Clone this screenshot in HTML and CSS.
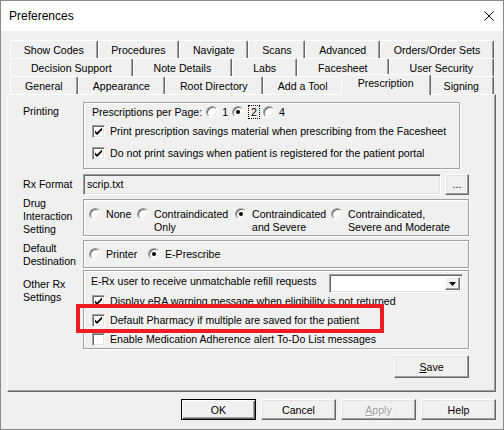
FILE: index.html
```html
<html>
<head>
    <meta http-equiv="Content-Type" content="text/html;charset=utf-8">
    <link rel="stylesheet" href="styles.css">
</head>
<body>
<div class="window">
    <div class="titlebar">
        <span class="title">Preferences</span>
        <svg class="close" viewBox="0 0 10 10"><path d="M0.5 0.5L9.5 9.5M9.5 0.5L0.5 9.5" stroke="#000" stroke-width="1"/></svg>
    </div>
    <div class="client">
        <div class="tabs">
            <div class="tab-row">
                <div class="tab">Show Codes</div>
                <div class="tab">Procedures</div>
                <div class="tab">Navigate</div>
                <div class="tab">Scans</div>
                <div class="tab">Advanced</div>
                <div class="tab">Orders/Order Sets</div>
            </div>
            <div class="tab-row">
                <div class="tab">Decision Support</div>
                <div class="tab">Note Details</div>
                <div class="tab">Labs</div>
                <div class="tab">Facesheet</div>
                <div class="tab">User Security</div>
            </div>
            <div class="tab-row">
                <div class="tab">General</div>
                <div class="tab">Appearance</div>
                <div class="tab">Root Directory</div>
                <div class="tab">Add a Tool</div>
                <div class="tab selected">Prescription</div>
                <div class="tab">Signing</div>
            </div>
        </div>

        <div class="panel">
            <div class="row row-printing">
                <div class="label">Printing</div>
                <div class="group printing">
                    <div class="pp-line">
                        <span>Prescriptions per Page:</span>
                        <span class="opt"><span class="radio"></span><span>1</span></span>
                        <span class="opt"><span class="radio on"></span><span class="focus">2</span></span>
                        <span class="opt"><span class="radio"></span><span>4</span></span>
                    </div>
                    <div class="check-row">
                        <span class="check on"><svg viewBox="0 0 11 11"><path d="M2 4.5v2.5l2 2 5-5v-2.5l-5 5z"/></svg></span>
                        <span>Print prescription savings material when prescribing from the Facesheet</span>
                    </div>
                    <div class="check-row second">
                        <span class="check on"><svg viewBox="0 0 11 11"><path d="M2 4.5v2.5l2 2 5-5v-2.5l-5 5z"/></svg></span>
                        <span>Do not print savings when patient is registered for the patient portal</span>
                    </div>
                </div>
            </div>

            <div class="row row-format">
                <div class="label">Rx Format</div>
                <div class="textbox">scrip.txt</div>
                <div class="btn dots">...</div>
            </div>

            <div class="row row-drug">
                <div class="label">Drug<br>Interaction<br>Setting</div>
                <div class="group drug">
                    <div class="opt"><span class="radio"></span><span>None</span></div>
                    <div class="opt"><span class="radio"></span><span>Contraindicated<br>Only</span></div>
                    <div class="opt"><span class="radio on"></span><span>Contraindicated<br>and Severe</span></div>
                    <div class="opt"><span class="radio"></span><span>Contraindicated,<br>Severe and Moderate</span></div>
                </div>
            </div>

            <div class="row row-dest">
                <div class="label">Default<br>Destination</div>
                <div class="group dest">
                    <div class="opt"><span class="radio"></span><span>Printer</span></div>
                    <div class="opt"><span class="radio on"></span><span>E-Prescribe</span></div>
                </div>
            </div>

            <div class="row row-other">
                <div class="label">Other Rx<br>Settings</div>
                <div class="group other">
                    <div class="erx-line">
                        <span class="erx-text">E-Rx user to receive unmatchable refill requests</span>
                        <div class="combo">
                            <div class="combo-btn"><svg viewBox="0 0 7 4"><path d="M0 0h7L3.5 4z"/></svg></div>
                        </div>
                    </div>
                    <div class="check-row">
                        <span class="check on"><svg viewBox="0 0 11 11"><path d="M2 4.5v2.5l2 2 5-5v-2.5l-5 5z"/></svg></span>
                        <span>Display eRA warning message when eligibility is not returned</span>
                    </div>
                    <div class="check-row">
                        <span class="check on"><svg viewBox="0 0 11 11"><path d="M2 4.5v2.5l2 2 5-5v-2.5l-5 5z"/></svg></span>
                        <span>Default Pharmacy if multiple are saved for the patient</span>
                    </div>
                    <div class="check-row">
                        <span class="check"></span>
                        <span>Enable Medication Adherence alert To-Do List messages</span>
                    </div>
                </div>
            </div>

            <div class="save-row">
                <div class="btn save"><u>S</u>ave</div>
            </div>
        </div>

        <div class="buttons">
            <div class="btn default">OK</div>
            <div class="btn">Cancel</div>
            <div class="btn disabled"><u>A</u>pply</div>
            <div class="btn">Help</div>
        </div>
    </div>

    <!-- annotation box drawn over the dialog -->
    <div class="highlight"></div>
</div>
</body>
</html>
```

FILE: styles.css
```css
* {
    box-sizing: border-box;
}

body {
    margin: 0;
    font-family: 'Liberation Sans', Arial, sans-serif;
    font-size: 10.6px;
    color: #000;
    background: #fff;
}

.window {
    position: relative;
    width: 504px;
    height: 430px;
    border: 1px solid #8a8a8a;
    background: #f0f0f0;
    display: flex;
    flex-direction: column;
}

.titlebar {
    height: 30px;
    flex: none;
    background: #fff;
    display: flex;
    align-items: center;
    justify-content: space-between;
    padding: 0 9px 0 8px;
    font-size: 12px;
}

.close {
    width: 10px;
    height: 10px;
}

.client {
    flex: 1;
    padding: 9px 7px 0 6px;
}

/* tabs */
.tabs {
    margin: 0 2px 0 3px;
}

.tab-row {
    display: flex;
    height: 18px;
}

.tab {
    flex: 1 1 auto;
    height: 18px;
    padding: 0 6px;
    text-align: center;
    line-height: 18px;
    white-space: nowrap;
    background: #f0f0f0;
    border-top: 1px solid #fff;
    border-left: 1px solid #fff;
    border-right: 1px solid #696969;
    box-shadow: inset -1px 0 #a0a0a0;
    border-radius: 2px 2px 0 0;
}

.tab.selected {
    position: relative;
    z-index: 2;
    margin: -2px -2px 0 -2px;
    padding: 0 8px;
    height: 21px;
    line-height: 17px;
}

/* panel */
.panel {
    position: relative;
    height: 298px;
    padding: 7px 0 0 15px;
    border: 1px solid;
    border-color: #fff #696969 #696969 #fff;
    box-shadow: inset -1px -1px #a0a0a0;
}

.row {
    display: flex;
}

.label {
    width: 60px;
    flex: none;
    line-height: 13px;
}

.group {
    border: 1px solid #a0a0a0;
    box-shadow: inset 1px 1px #fff, 1px 1px #fff;
    width: 386px;
}

.opt {
    display: flex;
    align-items: flex-start;
    gap: 5px;
    line-height: 13px;
}

.radio {
    position: relative;
    flex: none;
    width: 12px;
    height: 12px;
    border-radius: 50%;
    background: #fff;
    border: 1px solid;
    border-color: #a0a0a0 #fff #fff #a0a0a0;
    box-shadow: inset 1px 1px #696969, inset -1px -1px #e3e3e3;
}

.radio.on::after {
    content: "";
    position: absolute;
    left: 3px;
    top: 3px;
    width: 4px;
    height: 4px;
    border-radius: 50%;
    background: #000;
}

.check {
    flex: none;
    width: 13px;
    height: 13px;
    background: #fff;
    border: 1px solid;
    border-color: #a0a0a0 #fff #fff #a0a0a0;
    box-shadow: inset 1px 1px #696969, inset -1px -1px #e3e3e3;
}

.check svg {
    display: block;
    width: 11px;
    height: 11px;
}

.check-row {
    display: flex;
    align-items: center;
    gap: 5px;
    height: 13px;
    line-height: 13px;
    white-space: nowrap;
}

/* printing */
.row-printing .label {
    padding-top: 3px;
}

.printing {
    width: 377px;
    height: 67px;
    padding: 2px 8px;
}

.pp-line {
    display: flex;
    align-items: center;
    height: 14px;
    margin-bottom: 6px;
}

.pp-line .opt {
    align-items: center;
    gap: 4px;
    margin-left: 4px;
}

.pp-line .opt:first-of-type {
    margin-left: 5px;
}

.focus {
    outline: 1px dotted #000;
    padding: 0 2px;
    margin-left: 1px;
    line-height: 12px;
}

.printing .check-row.second {
    margin-top: 9px;
}

/* rx format */
.row-format {
    margin-top: 5px;
}

.row-format .label {
    padding-top: 4px;
}

.textbox {
    width: 358px;
    height: 21px;
    padding: 3px 0 0 3px;
    border: 1px solid;
    border-color: #a0a0a0 #fff #fff #a0a0a0;
    box-shadow: inset 1px 1px #696969, inset -1px -1px #e3e3e3;
}

.btn {
    display: flex;
    align-items: center;
    justify-content: center;
    width: 75px;
    height: 21px;
    background: #f0f0f0;
    border: 1px solid;
    border-color: #fff #696969 #696969 #fff;
    box-shadow: inset -1px -1px #a0a0a0, inset 1px 1px #e3e3e3;
}

.btn.dots {
    width: 24px;
    margin-left: 4px;
    align-items: flex-end;
    padding-bottom: 4px;
}

/* drug interaction */
.row-drug {
    margin-top: 4px;
}

.row-drug .label {
    margin-top: -2px;
}

.drug {
    display: flex;
    height: 37px;
    padding: 8px 0 0 5px;
}

.drug .opt:nth-child(1) {
    width: 48px;
}

.drug .opt:nth-child(2) {
    width: 98px;
}

.drug .opt:nth-child(3) {
    width: 96px;
}

/* destination */
.row-dest {
    margin-top: 4px;
}

.row-dest .label {
    margin-top: 2px;
}

.dest {
    display: flex;
    height: 28px;
    padding: 7px 0 0 5px;
}

.dest .opt:first-child {
    width: 59px;
}

/* other */
.row-other {
    margin-top: 2px;
}

.row-other .label {
    margin-top: 8px;
}

.other {
    height: 79px;
    padding: 3px 5px 0 8px;
    display: flex;
    flex-direction: column;
    gap: 6px;
}

.erx-line {
    display: flex;
    height: 19px;
    margin-bottom: -4px;
}

.erx-text {
    margin-left: -1px;
    padding-top: 1px;
    line-height: 13px;
}

.combo {
    margin-left: auto;
    width: 134px;
    height: 19px;
    background: #fff;
    border: 1px solid;
    border-color: #a0a0a0 #fff #fff #a0a0a0;
    box-shadow: inset 1px 1px #696969, inset -1px -1px #e3e3e3;
    display: flex;
    justify-content: flex-end;
    padding: 2px;
}

.combo-btn {
    width: 15px;
    height: 13px;
    display: flex;
    align-items: center;
    justify-content: center;
    background: #f0f0f0;
    border: 1px solid;
    border-color: #fff #696969 #696969 #fff;
    box-shadow: inset -1px -1px #a0a0a0;
}

.combo-btn svg {
    width: 7px;
    height: 4px;
}

/* save + dialog buttons */
.save-row {
    display: flex;
    justify-content: flex-end;
    width: 386px;
    margin: 6px 0 0 60px;
}

.btn.save {
    height: 23px;
}

.buttons {
    display: flex;
    justify-content: flex-end;
    gap: 5px;
    margin-top: 7px;
}

.btn.default {
    border-color: #000;
    box-shadow: inset 1px 1px #fff, inset -1px -1px #696969, inset -2px -2px #a0a0a0;
}

.btn.disabled {
    color: #a0a0a0;
    text-shadow: 1px 1px #fff;
}

.highlight {
    position: absolute;
    left: 75px;
    top: 303px;
    width: 308px;
    height: 29px;
    border: 4px solid #ed1c24;
}
```
